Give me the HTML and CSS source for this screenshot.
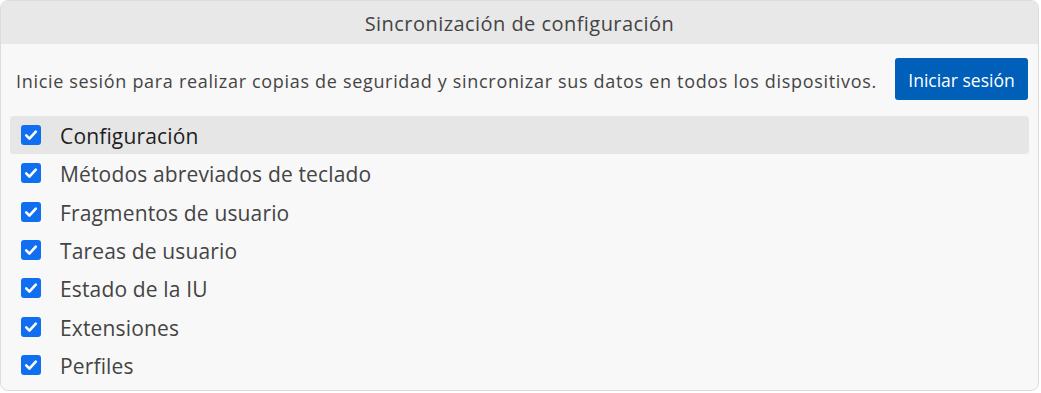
FILE: index.html
```html
<!DOCTYPE html>
<html lang="es">
<head>
<meta charset="utf-8">
<title>Sincronización de configuración</title>
<link rel="stylesheet" href="styles.css">
</head>
<body>
<div class="dialog">
  <div class="title">Sincronización de configuración</div>
  <div class="content">
    <div class="signin">
      <span class="msg">Inicie sesión para realizar copias de seguridad y sincronizar sus datos en todos los dispositivos.</span>
      <button class="btn">Iniciar sesión</button>
    </div>
    <ul class="list">
      <li class="item active"><span class="cb"><svg viewBox="0 0 20 20"><path d="M5.2 10.4 L8.4 13.6 L14.8 6.6" /></svg></span><span class="label">Configuración</span></li>
      <li class="item"><span class="cb"><svg viewBox="0 0 20 20"><path d="M5.2 10.4 L8.4 13.6 L14.8 6.6" /></svg></span><span class="label">Métodos abreviados de teclado</span></li>
      <li class="item"><span class="cb"><svg viewBox="0 0 20 20"><path d="M5.2 10.4 L8.4 13.6 L14.8 6.6" /></svg></span><span class="label">Fragmentos de usuario</span></li>
      <li class="item"><span class="cb"><svg viewBox="0 0 20 20"><path d="M5.2 10.4 L8.4 13.6 L14.8 6.6" /></svg></span><span class="label">Tareas de usuario</span></li>
      <li class="item"><span class="cb"><svg viewBox="0 0 20 20"><path d="M5.2 10.4 L8.4 13.6 L14.8 6.6" /></svg></span><span class="label">Estado de la IU</span></li>
      <li class="item"><span class="cb"><svg viewBox="0 0 20 20"><path d="M5.2 10.4 L8.4 13.6 L14.8 6.6" /></svg></span><span class="label">Extensiones</span></li>
      <li class="item"><span class="cb"><svg viewBox="0 0 20 20"><path d="M5.2 10.4 L8.4 13.6 L14.8 6.6" /></svg></span><span class="label">Perfiles</span></li>
    </ul>
  </div>
</div>
</body>
</html>
```

FILE: styles.css
```css
* { box-sizing: border-box; }
html, body {
  margin: 0;
  padding: 0;
  background: #ffffff;
}
body {
  font-family: "Open Sans", "Noto Sans", "Liberation Sans", sans-serif;
  color: #444;
}
.dialog {
  width: 1039px;
  height: 391px;
  border: 1px solid #dcdcdc;
  border-radius: 8px;
  overflow: hidden;
  background: #f8f8f8;
  display: flex;
  flex-direction: column;
}
.title {
  height: 43px;
  background: #e8e8e8;
  display: flex;
  align-items: center;
  justify-content: center;
  font-size: 20px;
  letter-spacing: 0.45px;
  color: #444;
  padding-top: 1px;
}
.content {
  padding: 14px 9px 0 9px;
}
.signin {
  display: flex;
  align-items: center;
  justify-content: space-between;
  padding: 0 1px 0 6px;
  height: 42px;
}
.msg {
  font-size: 18px;
  letter-spacing: 0.68px;
  color: #444;
  padding-top: 3px;
}
.btn {
  height: 42px;
  width: 133px;
  border: none;
  border-radius: 3px;
  background: #005fb8;
  color: #fff;
  font-family: inherit;
  font-size: 17.5px;
  padding: 2px 0 0 0;
}
.list {
  list-style: none;
  margin: 16px 0 0 0;
  padding: 0;
}
.item {
  height: 38.3px;
  display: flex;
  align-items: center;
  border-radius: 4px;
  padding-left: 11px;
}
.item.active {
  background: #e6e6e6;
}
.cb {
  width: 20px;
  height: 20px;
  border-radius: 3px;
  background: #0f6ff0;
  display: flex;
  flex-shrink: 0;
}
.cb svg {
  width: 20px;
  height: 20px;
}
.cb path {
  fill: none;
  stroke: #fff;
  stroke-width: 2.6;
  stroke-linecap: round;
  stroke-linejoin: round;
}
.label {
  margin-left: 19px;
  font-size: 21px;
  letter-spacing: 0.15px;
  color: #444;
  padding-top: 2px;
}
.item.active .label {
  color: #1e1e1e;
}
```
